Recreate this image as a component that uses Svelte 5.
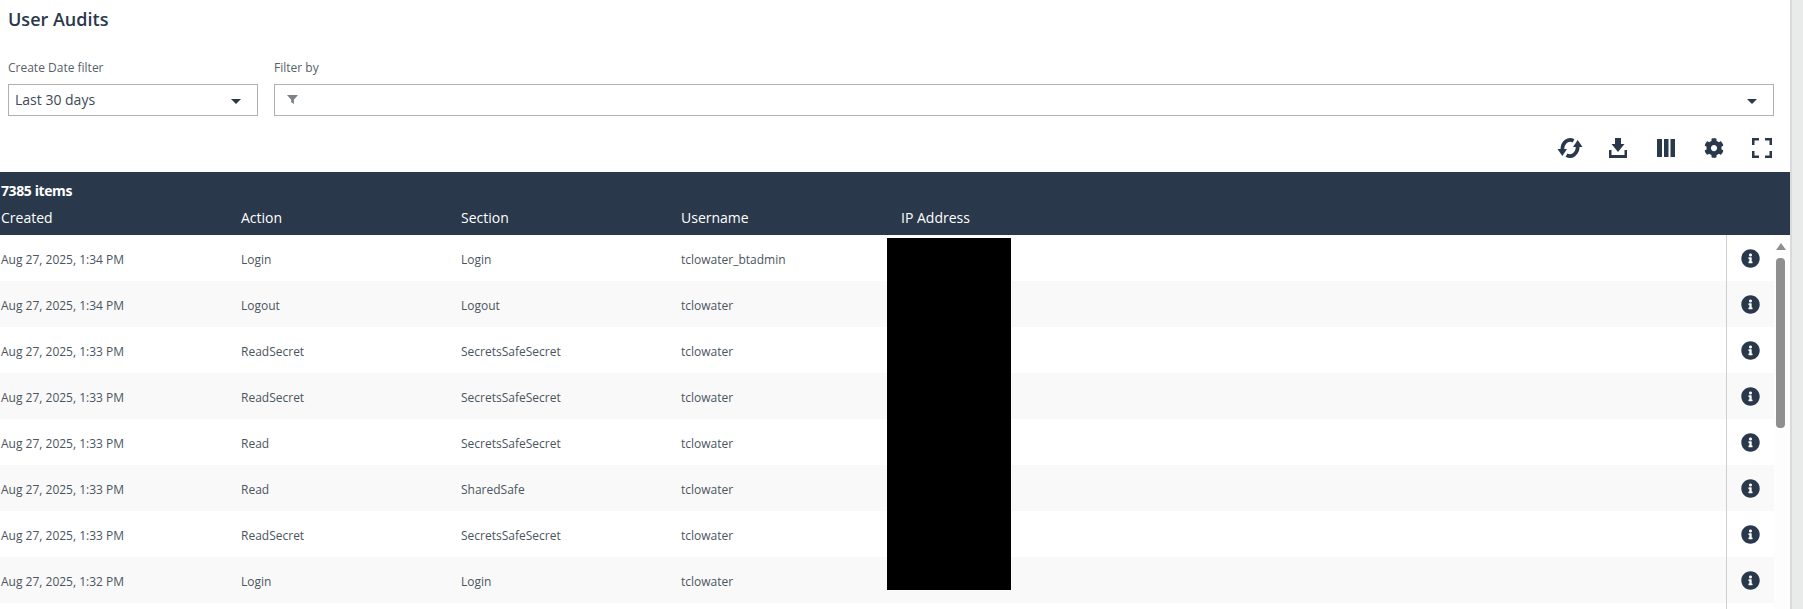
<script>
  const rows = [
    { created: 'Aug 27, 2025, 1:34 PM', action: 'Login', section: 'Login', username: 'tclowater_btadmin' },
    { created: 'Aug 27, 2025, 1:34 PM', action: 'Logout', section: 'Logout', username: 'tclowater' },
    { created: 'Aug 27, 2025, 1:33 PM', action: 'ReadSecret', section: 'SecretsSafeSecret', username: 'tclowater' },
    { created: 'Aug 27, 2025, 1:33 PM', action: 'ReadSecret', section: 'SecretsSafeSecret', username: 'tclowater' },
    { created: 'Aug 27, 2025, 1:33 PM', action: 'Read', section: 'SecretsSafeSecret', username: 'tclowater' },
    { created: 'Aug 27, 2025, 1:33 PM', action: 'Read', section: 'SharedSafe', username: 'tclowater' },
    { created: 'Aug 27, 2025, 1:33 PM', action: 'ReadSecret', section: 'SecretsSafeSecret', username: 'tclowater' },
    { created: 'Aug 27, 2025, 1:32 PM', action: 'Login', section: 'Login', username: 'tclowater' }
  ];
</script>

<div class="page">
  <main class="content">
    <h1>User Audits</h1>

    <div class="filters">
      <div class="field date">
        <label for="date-filter">Create Date filter</label>
        <div class="select" id="date-filter">
          <span>Last 30 days</span>
          <i class="caret"></i>
        </div>
      </div>
      <div class="field grow">
        <label for="filter-by">Filter by</label>
        <div class="select" id="filter-by">
          <svg class="funnel" viewBox="0 0 12 12"><path d="M0 1h12L7.5 6.200V11L4.500 9V6.200z" /></svg>
          <i class="caret"></i>
        </div>
      </div>
    </div>

    <div class="toolbar">
      <svg class="tool refresh" viewBox="0 0 24 20">
        <path class="arc" d="M8.500 17.200C13.500 20 19.500 16 19.700 8.500" />
        <path d="M19.700 2L24.500 9h-9.500z" />
        <path class="arc" d="M15.500 2.800C10.500 0 4.500 4 4.300 11.500" />
        <path d="M4.300 18L-.5 11h9.500z" />
      </svg>
      <svg class="tool" viewBox="0 0 20 20"><path d="M7 0h6v6h3.500L10 14 3.500 6H7zM1 12h2.500v5h13v-5H19v8H1z" /></svg>
      <svg class="tool" viewBox="0 0 20 20"><path d="M1 1h5v18H1zM8 1h4.500v18H8zM14.500 1H19v18h-4.500z" /></svg>
      <svg class="tool" viewBox="0 0 512 512"><path d="M487.4 315.7l-42.6-24.6c4.3-23.2 4.3-47 0-70.2l42.6-24.6c4.9-2.8 7.1-8.6 5.5-14-11.1-35.6-30-67.8-54.7-94.6-3.8-4.1-10-5.1-14.8-2.3L380.8 110c-17.9-15.4-38.5-27.3-60.8-35.1V25.8c0-5.6-3.9-10.5-9.4-11.7-36.7-8.2-74.3-7.8-109.2 0-5.5 1.2-9.4 6.1-9.4 11.7V75c-22.2 7.9-42.8 19.8-60.8 35.1L88.7 85.5c-4.9-2.8-11-1.9-14.8 2.3-24.7 26.7-43.6 58.9-54.7 94.6-1.7 5.4.6 11.2 5.5 14L67.3 221c-4.3 23.2-4.3 47 0 70.2l-42.6 24.6c-4.9 2.8-7.1 8.6-5.5 14 11.1 35.6 30 67.8 54.7 94.6 3.8 4.1 10 5.1 14.8 2.3l42.6-24.6c17.9 15.4 38.5 27.3 60.8 35.1v49.2c0 5.6 3.9 10.5 9.4 11.7 36.7 8.2 74.3 7.8 109.2 0 5.5-1.2 9.4-6.1 9.4-11.7v-49.2c22.2-7.9 42.8-19.8 60.8-35.1l42.6 24.6c4.9 2.8 11 1.9 14.8-2.3 24.7-26.7 43.6-58.9 54.7-94.6 1.5-5.5-.7-11.3-5.6-14.1zM256 336c-44.1 0-80-35.9-80-80s35.9-80 80-80 80 35.9 80 80-35.9 80-80 80z" /></svg>
      <svg class="tool" viewBox="0 0 20 20"><path d="M0 0h7v2.500H2.500V7H0zM13 0h7v7h-2.500V2.500H13zM0 13h2.500v4.500H7V20H0zM17.500 13H20v7h-7v-2.500h4.500z" /></svg>
    </div>

    <section class="grid">
      <header class="grid-head">
        <div class="count">7385 items</div>
        <div class="cols">
          <span>Created</span>
          <span>Action</span>
          <span>Section</span>
          <span>Username</span>
          <span>IP Address</span>
        </div>
      </header>

      <div class="grid-body">
        <div class="rows">
          {#each rows as row}
            <div class="row">
              <span>{row.created}</span>
              <span>{row.action}</span>
              <span>{row.section}</span>
              <span>{row.username}</span>
              <span></span>
              <span class="info">
                <svg viewBox="0 0 512 512"><path d="M256 8C119.043 8 8 119.083 8 256c0 136.997 111.043 248 248 248s248-111.003 248-248C504 119.083 392.957 8 256 8zm0 110c23.196 0 42 18.804 42 42s-18.804 42-42 42-42-18.804-42-42 18.804-42 42-42zm56 254c0 6.627-5.373 12-12 12h-88c-6.627 0-12-5.373-12-12v-24c0-6.627 5.373-12 12-12h12v-64h-12c-6.627 0-12-5.373-12-12v-24c0-6.627 5.373-12 12-12h64c6.627 0 12 5.373 12 12v100h12c6.627 0 12 5.373 12 12v24z" /></svg>
              </span>
            </div>
          {/each}
          <div class="rows-tail"></div>
        </div>
        <div class="scrollbar">
          <i class="arrow"></i>
          <i class="thumb"></i>
        </div>
        <div class="redaction"></div>
      </div>
    </section>
  </main>
  <aside class="gutter"></aside>
</div>

<style>
  :global(body) {
    margin: 0;
    overflow: hidden;
    background: #fff;
    font-family: 'Open Sans', 'Liberation Sans', sans-serif;
    color: #3d4a57;
  }

  .page {
    display: flex;
    height: 609px;
    overflow: hidden;
  }

  .content {
    flex: 1;
    min-width: 0;
  }

  .gutter {
    width: 13px;
    background: #e9eaea;
    border-left: 2px solid #dadada;
    box-sizing: border-box;
  }

  h1 {
    margin: 0;
    padding: 6px 8px 0;
    height: 47px;
    box-sizing: border-box;
    font-size: 18px;
    line-height: 26px;
    font-weight: 600;
    color: #29384a;
  }

  .filters {
    display: flex;
    gap: 16px;
    padding: 0 16px 0 8px;
  }

  .field {
    display: flex;
    flex-direction: column;
  }

  .date {
    width: 250px;
  }

  .grow {
    flex: 1;
  }

  label {
    display: block;
    height: 37px;
    box-sizing: border-box;
    padding-top: 13px;
    font-size: 12px;
    line-height: 16px;
    color: #555f69;
  }

  .select {
    height: 32px;
    box-sizing: border-box;
    border: 1px solid #b0b0b0;
    display: flex;
    align-items: center;
    justify-content: space-between;
    padding: 0 16px 1px 6px;
    font-size: 14px;
    color: #3d4a57;
  }

  .caret {
    width: 0;
    height: 0;
    border-left: 5px solid transparent;
    border-right: 5px solid transparent;
    border-top: 5px solid #29384a;
    margin-top: 3px;
  }

  .funnel {
    width: 11px;
    height: 11px;
    margin-left: 6px;
    fill: #7d8287;
  }

  .toolbar {
    display: flex;
    justify-content: flex-end;
    align-items: center;
    gap: 28px;
    height: 56px;
    box-sizing: border-box;
    padding: 8px 18px 0 0;
  }

  .tool {
    width: 20px;
    height: 20px;
    fill: #29384a;
    overflow: visible;
  }

  .refresh {
    width: 24px;
    margin: 0 -2px;
  }

  .arc {
    fill: none;
    stroke: #29384a;
    stroke-width: 3.8;
  }

  .grid-head {
    height: 63px;
    background: #29384a;
    color: #fff;
    box-sizing: border-box;
    padding: 7px 0 0 1px;
  }

  .count {
    font-size: 14px;
    line-height: 24px;
    font-weight: 700;
    letter-spacing: -0.4px;
  }

  .cols {
    display: grid;
    grid-template-columns: 240px 220px 220px 220px 1fr;
    font-size: 14px;
    line-height: 20px;
    margin-top: 5px;
  }

  .grid-body {
    position: relative;
    display: flex;
  }

  .rows {
    width: 1774px;
    flex: none;
  }

  .row {
    display: grid;
    grid-template-columns: 240px 220px 220px 220px 1fr 48px;
    align-items: center;
    height: 46px;
    padding-left: 1px;
    box-sizing: border-box;
    font-size: 12px;
    color: #4a5560;
  }

  .row:nth-child(even) {
    background: #f9f9f9;
  }

  .row > span {
    padding-top: 2px;
  }

  .row > .info {
    height: 46px;
    padding-top: 0;
    border-left: 1px solid #cfcfcf;
    display: flex;
    align-items: center;
    justify-content: center;
  }

  .info svg {
    width: 19px;
    height: 19px;
    fill: #29384a;
  }

  .rows-tail {
    height: 6px;
    margin-left: 1726px;
    border-left: 1px solid #cfcfcf;
  }

  .scrollbar {
    flex: 1;
    display: flex;
    flex-direction: column;
    align-items: center;
    padding: 8px 3px 0 0;
    background: #fdfdfd;
  }

  .arrow {
    width: 0;
    height: 0;
    border-left: 5px solid transparent;
    border-right: 5px solid transparent;
    border-bottom: 7px solid #8f8f8f;
  }

  .thumb {
    width: 9px;
    height: 170px;
    margin-top: 8px;
    border-radius: 4px;
    background: #8f8f8f;
  }

  .redaction {
    position: absolute;
    left: 887px;
    top: 3px;
    width: 124px;
    height: 352px;
    background: #000;
  }
</style>
